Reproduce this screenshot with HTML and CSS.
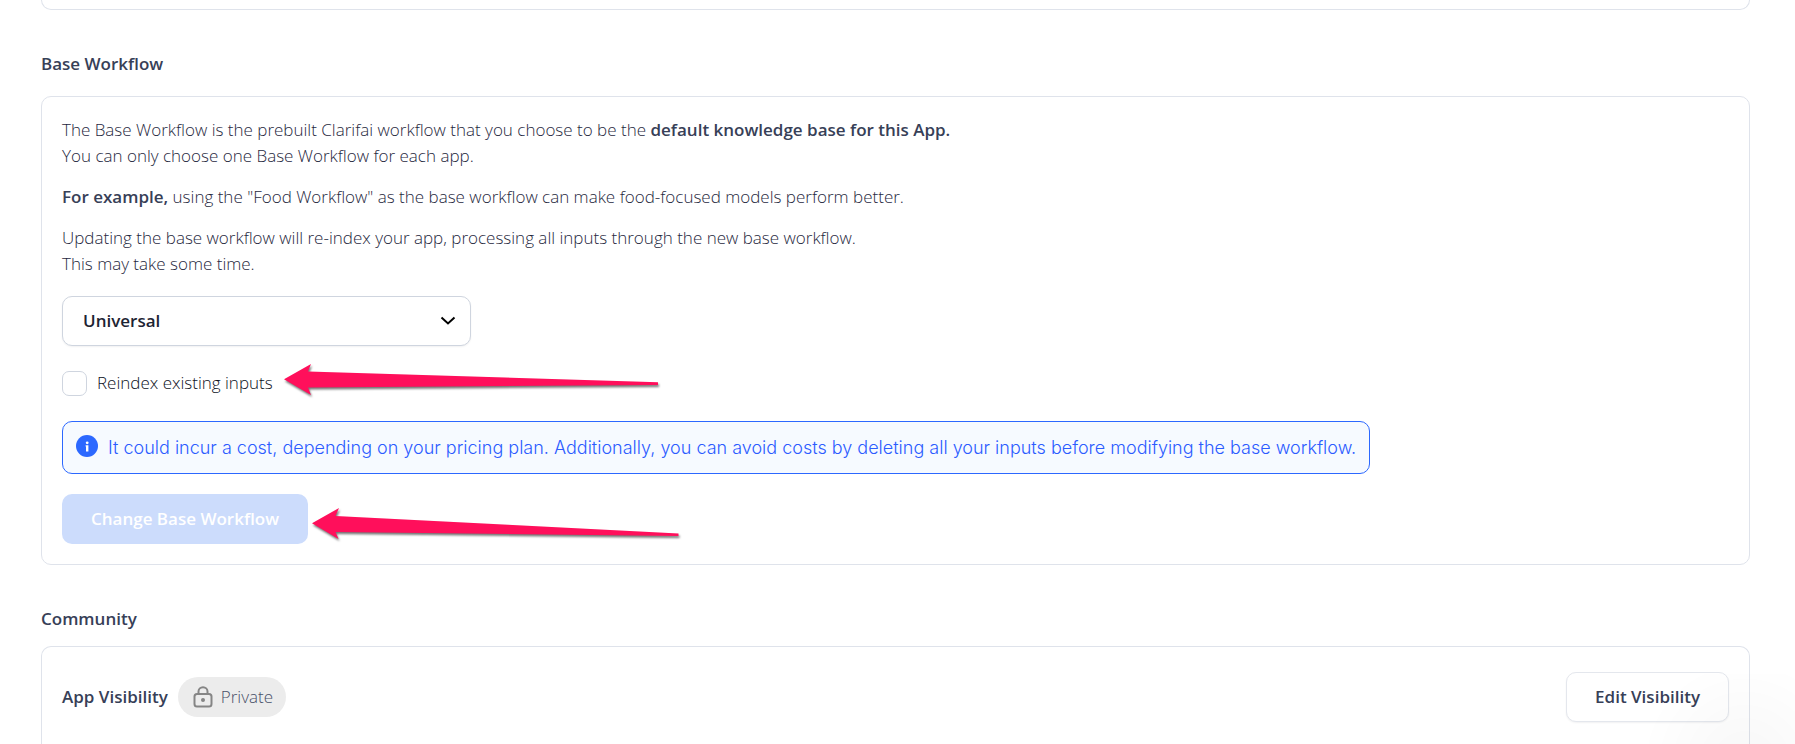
FILE: index.html
```html
<!DOCTYPE html>
<html lang="en">
<head>
<meta charset="utf-8">
<meta name="viewport" content="width=device-width, initial-scale=1">
<title>App Settings</title>
<link rel="stylesheet" href="styles.css">
</head>
<body>
<main class="page">
  <div class="card card-prev"></div>

  <section class="section">
    <h2 class="section-title">Base Workflow</h2>
    <div class="card card-workflow">
      <div class="description">
        <p>The Base Workflow is the prebuilt Clarifai workflow that you choose to be the <strong>default knowledge base for this App.</strong><br>You can only choose one Base Workflow for each app.</p>
        <p><strong>For example,</strong> using the "Food Workflow" as the base workflow can make food-focused models perform better.</p>
        <p>Updating the base workflow will re-index your app, processing all inputs through the new base workflow.<br>This may take some time.</p>
      </div>

      <div class="select-wrap">
        <select class="select" aria-label="Base workflow">
          <option>Universal</option>
        </select>
        <svg class="select-chevron" width="16" height="10" viewBox="0 0 16 10" aria-hidden="true"><path d="M1.5 1.5 L8 7.5 L14.5 1.5" fill="none" stroke="#000" stroke-width="2"/></svg>
      </div>

      <div class="marked reindex">
        <input class="checkbox" type="checkbox" id="reindex">
        <label class="checkbox-label" for="reindex">Reindex existing inputs</label>
        <svg class="arrow arrow-reindex" width="380" height="40" viewBox="0 0 380 40" aria-hidden="true"><path d="M2 19.3 L29 4 L26 11.5 L376 22.3 V25 L26 27.5 L29 35 Z"/></svg>
      </div>

      <div class="notice">
        <svg class="notice-icon" width="22" height="22" viewBox="0 0 22 22" aria-hidden="true"><circle cx="11" cy="11" r="11" fill="#2c68ff"/><circle cx="11.2" cy="7.8" r="1.4" fill="#fff"/><path d="M9.6 10.2 H12.4 V16.4 H10 V11.4 H9.6 Z" fill="#fff"/></svg>
        <span>It could incur a cost, depending on your pricing plan. Additionally, you can avoid costs by deleting all your inputs before modifying the base workflow.</span>
      </div>

      <div class="marked">
        <button class="button button-primary" type="button" disabled>Change Base Workflow</button>
        <svg class="arrow arrow-change" width="380" height="40" viewBox="0 0 380 40" aria-hidden="true"><path d="M2 19.3 L29 4 L25.5 12 L368.5 29.6 V32 L25.5 28 L28.5 35 Z"/></svg>
      </div>
    </div>
  </section>

  <section class="section section-community">
    <h2 class="section-title">Community</h2>
    <div class="card card-community">
      <div class="visibility">
        <h3 class="visibility-title">App Visibility</h3>
        <span class="badge">
          <svg width="20" height="22" viewBox="0 0 20 22" fill="none" stroke="#858585" stroke-width="2" aria-hidden="true"><rect x="1.5" y="8" width="17" height="12.5" rx="2.5"/><path d="M5.5 8 V5.5 a4.2 4 0 0 1 9 0 V8"/><circle cx="10" cy="14" r="2" fill="#858585" stroke="none"/></svg>
          Private
        </span>
        <button class="button button-outline" type="button">Edit Visibility</button>
      </div>
    </div>
  </section>
</main>
<div class="corner-glow" aria-hidden="true"></div>
</body>
</html>
```
FILE: styles.css
```css
* {
  box-sizing: border-box;
}

body {
  margin: 0;
  background: #fff;
  color: #1f2840;
  font-family: "Open Sans", "Noto Sans", sans-serif;
  font-size: 17px;
  font-weight: 300;
  line-height: 26px;
}

h2, h3, p {
  margin: 0;
}

strong {
  color: #374057;
  font-weight: 600;
}

.page {
  display: flex;
  flex-direction: column;
  height: 100vh;
  overflow: hidden;
  padding: 0 45px 0 41px;
}

.section {
  flex: none;
}

.section-title,
.visibility-title {
  color: #374057;
  font-size: 17px;
  font-weight: 600;
  line-height: 26px;
}

.card {
  border: 1px solid #dfe3eb;
  border-radius: 10px;
  background: #fff;
}

.card-prev {
  flex: none;
  height: 10px;
  border-top: 0;
  border-radius: 0 0 10px 10px;
  margin-bottom: 41px;
}

.card-workflow {
  display: flex;
  flex-direction: column;
  align-items: flex-start;
  margin-top: 19px;
  padding: 20px;
}

.description {
  display: flex;
  flex-direction: column;
  gap: 15px;
}

.select-wrap {
  display: grid;
  align-items: center;
  width: 409px;
  max-width: 100%;
  margin-top: 19px;
}

.select,
.select-chevron {
  grid-area: 1 / 1;
}

.select {
  appearance: none;
  width: 100%;
  height: 50px;
  padding: 0 20px;
  border: 1px solid #cfd5df;
  border-radius: 10px;
  background: #fff;
  box-shadow: 0 1px 2px rgba(16, 24, 40, 0.06);
  color: #1d2433;
  font: inherit;
  font-weight: 600;
}

.select-chevron {
  justify-self: end;
  margin-right: 15px;
  pointer-events: none;
}

.marked {
  position: relative;
  display: flex;
  align-items: center;
}

.reindex {
  gap: 10px;
  margin: 24px 0 25px;
}

.checkbox {
  appearance: none;
  width: 25px;
  height: 25px;
  margin: 0;
  border: 1px solid #cfd5df;
  border-radius: 7px;
  background: #fff;
}

.checkbox:checked {
  background: #2c68ff;
}

.checkbox-label {
  color: #0c111d;
}

.arrow {
  position: absolute;
  top: 50%;
  fill: #ff0f5b;
  filter: drop-shadow(1px 2px 1px rgba(0, 0, 0, 0.55));
  pointer-events: none;
}

.arrow-reindex {
  left: 220px;
  margin-top: -23px;
}

.arrow-change {
  left: 248px;
  margin-top: -15px;
}

.notice {
  display: flex;
  align-items: flex-start;
  gap: 10px;
  margin-bottom: 20px;
  padding: 13px 13px 12px;
  border: 1px solid #2c68ff;
  border-radius: 10px;
  background: #f6faff;
  color: #2c5cff;
  font-family: Inter, sans-serif;
  font-size: 18px;
}

.notice-icon {
  flex: none;
}

.button {
  height: 50px;
  padding: 0 28px;
  border: 1px solid transparent;
  border-radius: 10px;
  font: inherit;
  font-weight: 600;
}

.button-primary {
  background: #ccdcfc;
  color: #fff;
}

.button-outline {
  margin-left: auto;
  border-color: #e4e7ed;
  background: #fff;
  box-shadow: 0 1px 2px rgba(16, 24, 40, 0.06);
  color: #374057;
}

.section-community {
  display: flex;
  flex: 1;
  flex-direction: column;
  margin-top: 41px;
}

.card-community {
  flex: 1;
  margin-top: 14px;
  padding: 25px 20px 0;
  border-bottom: 0;
  border-radius: 10px 10px 0 0;
}

.visibility {
  display: flex;
  align-items: center;
}

.badge {
  display: flex;
  align-items: center;
  gap: 8px;
  height: 40px;
  margin-left: 10px;
  padding: 0 13px 0 15px;
  border-radius: 20px;
  background: #ececec;
  color: #485069;
}

.corner-glow {
  position: fixed;
  right: 0;
  bottom: 0;
  width: 160px;
  height: 70px;
  background: radial-gradient(circle at 110px 90px, rgba(0, 0, 0, 0.03), rgba(0, 0, 0, 0) 105px);
  pointer-events: none;
}
```
